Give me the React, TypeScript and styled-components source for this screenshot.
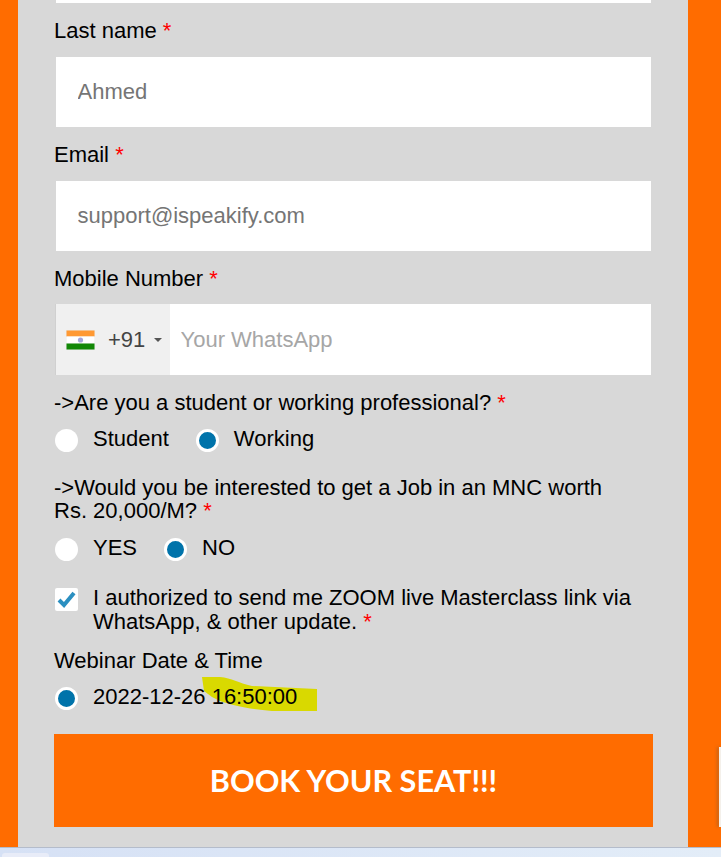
import React from 'react';
import styled, { createGlobalStyle } from 'styled-components';

const GlobalStyle = createGlobalStyle`
  html, body {
    margin: 0;
    padding: 0;
    height: 100%;
    overflow: hidden;
    background: #ff6c00;
    font-family: "Liberation Sans", Arial, sans-serif;
  }
`;

const Page = styled.div`
  position: relative;
  display: flex;
  flex-direction: column;
  width: 721px;
  height: 857px;
  overflow: hidden;
`;

const Backdrop = styled.div`
  flex: 1;
  min-height: 0;
  background: #ff6c00;
  padding: 0 33px 0 18px;
`;

const Panel = styled.form`
  height: 100%;
  box-sizing: border-box;
  background: #d8d8d8;
  padding: 0 35px 0 36px;
  color: #000;
  font-size: 22px;
`;

const TopEdge = styled.div`
  height: 3px;
  margin: 0 2px 15px;
  background: #fff;
`;

const Label = styled.div<{ $gap?: number }>`
  line-height: 26px;
  margin-bottom: ${(p) => p.$gap ?? 13}px;
`;

const Star = styled.span`
  color: #ff0000;
`;

const TextField = styled.input`
  display: block;
  box-sizing: border-box;
  width: 595px;
  height: 70px;
  margin: 0 2px 15px;
  padding: 0 21.5px;
  border: 0;
  outline: 0;
  background: #fff;
  font: inherit;
  color: #757575;

  &::placeholder {
    color: #757575;
    opacity: 1;
  }
`;

const PhoneField = styled.div`
  display: flex;
  width: 596px;
  height: 71px;
  margin: 0 2px 16px 1px;
  background: #fff;
`;

const CountryBox = styled.div`
  display: flex;
  align-items: center;
  box-sizing: border-box;
  width: 115px;
  padding-left: 10px;
  border-left: 1px solid #d0d0d0;
  background: #f0f0f0;
  color: #444;
`;

const DialCode = styled.span`
  margin-left: 13px;
`;

const Caret = styled.span`
  width: 0;
  height: 0;
  margin-left: 9px;
  border-left: 4px solid transparent;
  border-right: 4px solid transparent;
  border-top: 4px solid #555;
`;

const PhoneInput = styled.input`
  flex: 1;
  min-width: 0;
  padding: 0 10.5px;
  border: 0;
  outline: 0;
  background: transparent;
  font: inherit;

  &::placeholder {
    color: #a6a6a6;
    opacity: 1;
  }
`;

const Question = styled.div<{ $gap: number }>`
  line-height: 23px;
  margin-bottom: ${(p) => p.$gap}px;
`;

const Options = styled.div<{ $after: number }>`
  position: relative;
  display: flex;
  align-items: center;
  height: 26px;
  margin-bottom: ${(p) => p.$after}px;
`;

const Option = styled.label`
  position: relative;
  z-index: 1;
  display: flex;
  align-items: center;
  gap: 15px;
  margin-right: 26px;
`;

const Radio = styled.span<{ $on?: boolean }>`
  box-sizing: border-box;
  width: 23px;
  height: 23px;
  margin: 2px 0 0 1px;
  border-radius: 50%;
  background: ${(p) => (p.$on ? '#0073aa' : '#fff')};
  border: ${(p) => (p.$on ? '3px solid #fff' : '0')};
`;

const ConsentRow = styled.div`
  display: flex;
  align-items: flex-start;
  gap: 15px;
  margin-bottom: 14px;
`;

const CheckBox = styled.span`
  flex: none;
  display: flex;
  align-items: center;
  justify-content: center;
  width: 23px;
  height: 23px;
  margin: 1px 0 0 1px;
  border-radius: 2px;
  background: #fff;
`;

const ConsentText = styled.div`
  line-height: 24px;
  margin-top: -1px;
`;

const Highlight = styled.svg`
  position: absolute;
  left: 148px;
  top: -7px;
`;

const BookButton = styled.button`
  display: block;
  width: 599px;
  height: 93px;
  padding: 0;
  border: 0;
  background: #ff6c00;
  color: #fff;
  font-family: Lato, "Liberation Sans", sans-serif;
  font-size: 30.6px;
  font-weight: 700;
`;

const TaskStrip = styled.div`
  position: relative;
  flex: none;
  height: 10px;
  box-sizing: border-box;
  border-top: 1px solid #b4bccb;
  background: linear-gradient(90deg, #d6e1f5, #e3edf8);
`;

const StripTab = styled.div`
  position: absolute;
  left: 2px;
  top: 5px;
  width: 47px;
  height: 5px;
  border-radius: 3px 3px 0 0;
  background: #e8ecf8;
`;

const EdgeTab = styled.div`
  position: absolute;
  right: 0;
  top: 747px;
  width: 2px;
  height: 80px;
  background: #f4f0ea;
  box-shadow: -2px 0 3px rgba(120, 90, 60, 0.5);
`;

const IndiaFlag = () => (
  <svg width="29" height="20" viewBox="0 0 29 20">
    <rect width="29" height="20" fill="#e9e9e9" />
    <rect x="0.5" y="0.5" width="28" height="6" fill="#ff9933" />
    <rect x="0.5" y="6.5" width="28" height="7" fill="#fff" />
    <rect x="0.5" y="13.5" width="28" height="6" fill="#128807" />
    <circle cx="14.5" cy="10" r="2.6" fill="#a5a5d8" />
  </svg>
);

const App = () => (
  <>
    <GlobalStyle />
    <Page>
      <Backdrop>
        <Panel>
          <TopEdge />
          <Label>
            Last name <Star>*</Star>
          </Label>
          <TextField placeholder="Ahmed" />
          <Label>
            Email <Star>*</Star>
          </Label>
          <TextField placeholder="support@ispeakify.com" />
          <Label $gap={12}>
            Mobile Number <Star>*</Star>
          </Label>
          <PhoneField>
            <CountryBox>
              <IndiaFlag />
              <DialCode>+91</DialCode>
              <Caret />
            </CountryBox>
            <PhoneInput placeholder="Your WhatsApp" />
          </PhoneField>
          <Question $gap={12}>
            -&gt;Are you a student or working professional? <Star>*</Star>
          </Question>
          <Options $after={24}>
            <Option>
              <Radio />
              Student
            </Option>
            <Option>
              <Radio $on />
              Working
            </Option>
          </Options>
          <Question $gap={13}>
            -&gt;Would you be interested to get a Job in an MNC worth
            <br />
            Rs. 20,000/M? <Star>*</Star>
          </Question>
          <Options $after={26}>
            <Option>
              <Radio />
              YES
            </Option>
            <Option>
              <Radio $on />
              NO
            </Option>
          </Options>
          <ConsentRow>
            <CheckBox>
              <svg width="21" height="19" viewBox="0 0 21 19">
                <path d="M3 10 L8 15 L18 3" fill="none" stroke="#2b8fc0" strokeWidth="4" />
              </svg>
            </CheckBox>
            <ConsentText>
              I authorized to send me ZOOM live Masterclass link via
              <br />
              WhatsApp, &amp; other update. <Star>*</Star>
            </ConsentText>
          </ConsentRow>
          <Label $gap={10}>Webinar Date &amp; Time</Label>
          <Options $after={24}>
            <Highlight width="120" height="40" viewBox="0 0 120 40">
              <path
                d="M0 0 L18 0 C30 1 36 6 50 9 L115 12 L115 34 L70 34 C45 32 30 28 18 24 L10 20 L2 14 Z"
                fill="#d9d900"
              />
            </Highlight>
            <Option>
              <Radio $on />
              2022-12-26 16:50:00
            </Option>
          </Options>
          <BookButton type="button">BOOK YOUR SEAT!!!</BookButton>
        </Panel>
      </Backdrop>
      <TaskStrip>
        <StripTab />
      </TaskStrip>
      <EdgeTab />
    </Page>
  </>
);

export default App;
